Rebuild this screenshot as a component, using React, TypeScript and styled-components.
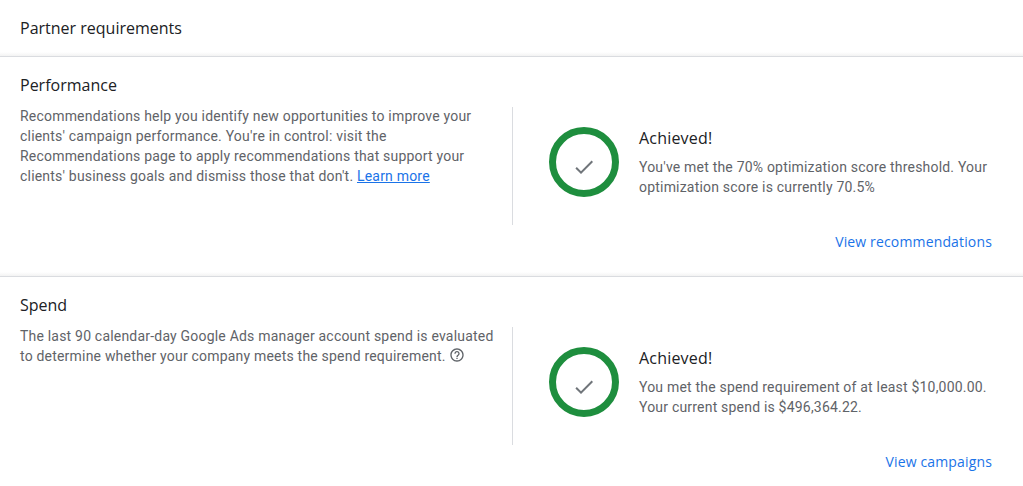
import React from "react";
import styled, { createGlobalStyle } from "styled-components";

const GlobalStyle = createGlobalStyle`
  html, body {
    margin: 0;
    padding: 0;
    background: #fff;
    overflow: hidden;
  }
  * {
    box-sizing: border-box;
  }
`;

const Page = styled.main`
  width: 1023px;
  height: 486px;
  overflow: hidden;
  background: #fff;
  font-family: Roboto, "Liberation Sans", sans-serif;
`;

const Header = styled.header`
  height: 57px;
  padding: 18px 20px 0;
  border-bottom: 1px solid #dadce0;
  background: linear-gradient(to top, #f3f3f3, #fff 4px);
`;

const Title = styled.h1`
  margin: 0;
  font-family: "Open Sans", sans-serif;
  font-size: 16px;
  line-height: 20px;
  font-weight: 500;
  color: #202124;
`;

const Section = styled.section`
  height: 220px;
  padding: 19px 31px 0 20px;
  border-bottom: 1px solid #dadce0;
  background: linear-gradient(to top, #f3f3f3, #fff 4px);

  &:last-child {
    border-bottom: none;
    background: #fff;
  }
`;

const SectionTitle = styled.h2`
  margin: -1px 0 12px;
  font-family: "Open Sans", sans-serif;
  font-size: 16px;
  line-height: 20px;
  font-weight: 500;
  color: #202124;
`;

const Columns = styled.div`
  display: grid;
  grid-template-columns: 492px 1fr;
  height: 118px;
`;

const Description = styled.p`
  margin: -1px 0 0;
  padding-right: 16px;
  font-size: 14px;
  line-height: 20px;
  letter-spacing: 0.2px;
  color: #5f6368;
`;

const LearnMore = styled.a`
  color: #1a73e8;
  text-decoration: underline;
`;

const HelpIcon = styled.svg`
  width: 16px;
  height: 16px;
  vertical-align: -2px;
  fill: #5f6368;
`;

const Status = styled.div`
  display: flex;
  align-items: flex-start;
  gap: 20px;
  height: 118px;
  padding: 20px 0 0 36px;
  border-left: 1px solid #dadce0;
`;

const Ring = styled.div`
  flex: none;
  width: 70px;
  height: 70px;
  border: 7px solid #1e8e3e;
  border-radius: 50%;
  display: flex;
  align-items: center;
  justify-content: center;
`;

const Check = styled.svg`
  width: 24px;
  height: 24px;
  margin-top: 10px;
  fill: #70757a;
`;

const StatusText = styled.div`
  display: flex;
  flex-direction: column;
  gap: 9px;
  margin-top: 1px;
`;

const StatusTitle = styled.h3`
  margin: 0;
  font-family: "Open Sans", sans-serif;
  font-size: 16px;
  line-height: 20px;
  letter-spacing: 0.2px;
  font-weight: 500;
  color: #202124;
`;

const StatusBody = styled.p`
  margin: 0;
  font-size: 14px;
  line-height: 20px;
  letter-spacing: 0.2px;
  color: #5f6368;
`;

const Actions = styled.div`
  display: flex;
  justify-content: flex-end;
  padding-top: 7px;
`;

const ActionLink = styled.a`
  font-family: "Open Sans", sans-serif;
  font-size: 14px;
  line-height: 20px;
  letter-spacing: 0.15px;
  font-weight: 500;
  color: #1a73e8;
`;

const StatusPanel = ({ children }: { children: React.ReactNode }) => (
  <Status>
    <Ring>
      <Check viewBox="0 0 24 24">
        <path d="M9 16.17 4.83 12l-1.42 1.41L9 19 21 7l-1.41-1.41z" />
      </Check>
    </Ring>
    <StatusText>
      <StatusTitle>Achieved!</StatusTitle>
      <StatusBody>{children}</StatusBody>
    </StatusText>
  </Status>
);

export default function App() {
  return (
    <Page>
      <GlobalStyle />
      <Header>
        <Title>Partner requirements</Title>
      </Header>
      <Section>
        <SectionTitle>Performance</SectionTitle>
        <Columns>
          <Description>
            Recommendations help you identify new opportunities to improve your
            clients' campaign performance. You're in control: visit the
            Recommendations page to apply recommendations that support your
            clients' business goals and dismiss those that don't.{" "}
            <LearnMore href="#">Learn more</LearnMore>
          </Description>
          <StatusPanel>
            You've met the 70% optimization score threshold. Your optimization
            score is currently 70.5%
          </StatusPanel>
        </Columns>
        <Actions>
          <ActionLink>View recommendations</ActionLink>
        </Actions>
      </Section>
      <Section>
        <SectionTitle>Spend</SectionTitle>
        <Columns>
          <Description>
            The last 90 calendar-day Google Ads manager account spend is
            evaluated to determine whether your company meets the spend
            requirement.{" "}
            <HelpIcon viewBox="0 0 24 24">
              <path d="M11 18h2v-2h-2v2zm1-16C6.48 2 2 6.48 2 12s4.48 10 10 10 10-4.48 10-10S17.52 2 12 2zm0 18c-4.41 0-8-3.59-8-8s3.59-8 8-8 8 3.59 8 8-3.59 8-8 8zm0-14c-2.21 0-4 1.79-4 4h2c0-1.1.9-2 2-2s2 .9 2 2c0 2-3 1.75-3 5h2c0-2.25 3-2.5 3-5 0-2.21-1.79-4-4-4z" />
            </HelpIcon>
          </Description>
          <StatusPanel>
            You met the spend requirement of at least $10,000.00. Your current
            spend is $496,364.22.
          </StatusPanel>
        </Columns>
        <Actions>
          <ActionLink>View campaigns</ActionLink>
        </Actions>
      </Section>
    </Page>
  );
}
